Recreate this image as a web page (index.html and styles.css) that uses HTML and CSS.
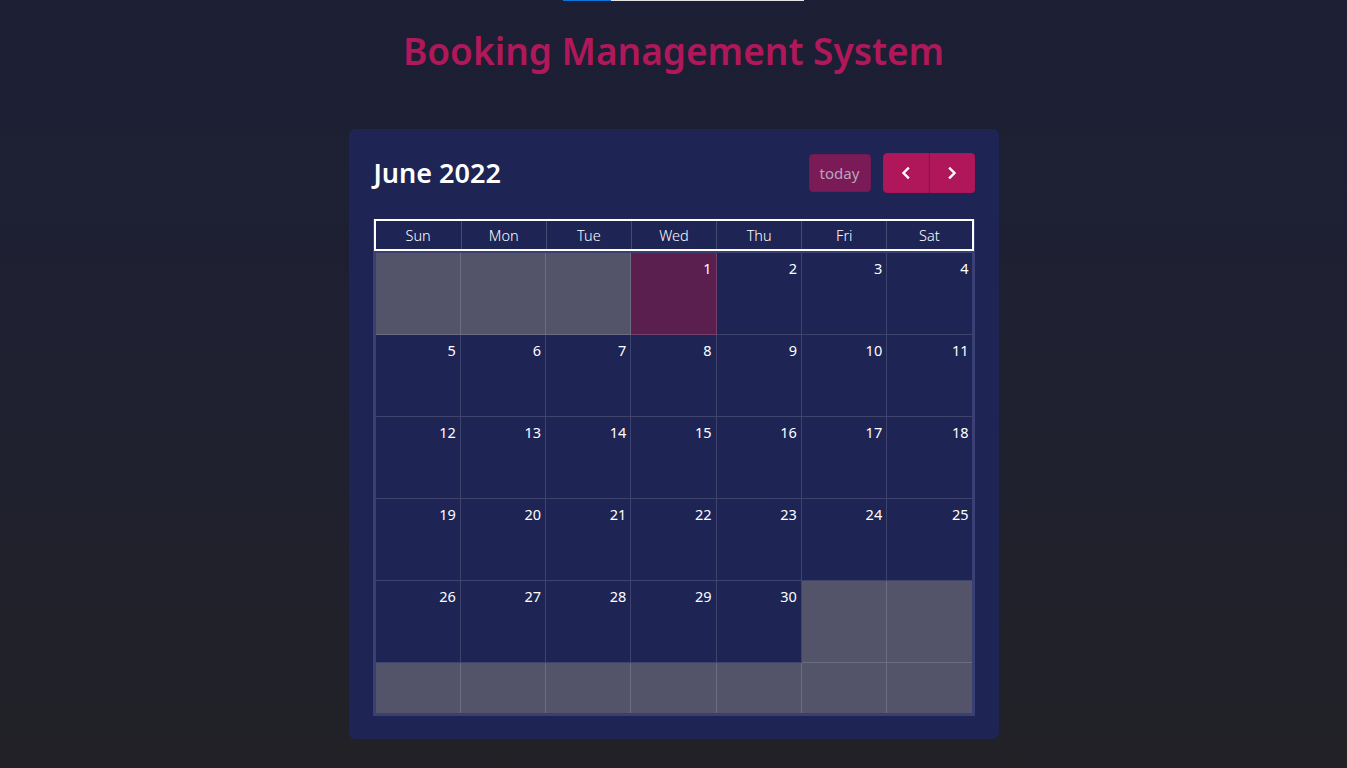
FILE: index.html
```html
<!DOCTYPE html>
<html lang="en">
<head>
<meta charset="utf-8">
<title>Booking Management System</title>
<link rel="stylesheet" href="styles.css">
</head>
<body>
<div class="topbar"><div class="topbar-fill"></div></div>
<h1 class="page-title">Booking Management System</h1>
<div class="card">
  <div class="toolbar">
    <h2 class="month-title">June 2022</h2>
    <div class="toolbar-actions">
      <button class="btn btn-today" disabled>today</button>
      <div class="btn-group">
        <button class="btn btn-nav" aria-label="prev">
          <svg width="14" height="14" viewBox="0 0 14 14"><polyline points="9,2.5 4.5,7 9,11.5" fill="none" stroke="#fff" stroke-width="2.4" stroke-linecap="square"/></svg>
        </button>
        <button class="btn btn-nav btn-nav-right" aria-label="next">
          <svg width="14" height="14" viewBox="0 0 14 14"><polyline points="5,2.5 9.5,7 5,11.5" fill="none" stroke="#fff" stroke-width="2.4" stroke-linecap="square"/></svg>
        </button>
      </div>
    </div>
  </div>
  <div class="calendar">
    <div class="cal-head">
      <div class="head-cell">Sun</div>
      <div class="head-cell">Mon</div>
      <div class="head-cell">Tue</div>
      <div class="head-cell">Wed</div>
      <div class="head-cell">Thu</div>
      <div class="head-cell">Fri</div>
      <div class="head-cell">Sat</div>
    </div>
    <div class="cal-body">
      <div class="day other"></div>
      <div class="day other"></div>
      <div class="day other"></div>
      <div class="day today">1</div>
      <div class="day">2</div>
      <div class="day">3</div>
      <div class="day">4</div>
      <div class="day">5</div>
      <div class="day">6</div>
      <div class="day">7</div>
      <div class="day">8</div>
      <div class="day">9</div>
      <div class="day">10</div>
      <div class="day">11</div>
      <div class="day">12</div>
      <div class="day">13</div>
      <div class="day">14</div>
      <div class="day">15</div>
      <div class="day">16</div>
      <div class="day">17</div>
      <div class="day">18</div>
      <div class="day">19</div>
      <div class="day">20</div>
      <div class="day">21</div>
      <div class="day">22</div>
      <div class="day">23</div>
      <div class="day">24</div>
      <div class="day">25</div>
      <div class="day">26</div>
      <div class="day">27</div>
      <div class="day">28</div>
      <div class="day">29</div>
      <div class="day">30</div>
      <div class="day other"></div>
      <div class="day other"></div>
      <div class="day other short"></div>
      <div class="day other short"></div>
      <div class="day other short"></div>
      <div class="day other short"></div>
      <div class="day other short"></div>
      <div class="day other short"></div>
      <div class="day other short"></div>
    </div>
  </div>
</div>
</body>
</html>
```

FILE: styles.css
```css
* { box-sizing: border-box; }

html, body {
  margin: 0;
  padding: 0;
}

body {
  min-height: 768px;
  background: linear-gradient(180deg, #1c1f35 0%, #1f2030 50%, #212126 100%);
  font-family: "Noto Sans", "Open Sans", sans-serif;
  color: #fff;
  overflow: hidden;
}

.topbar {
  width: 241px;
  height: 1px;
  margin-left: 563px;
  background: #e4e4e4;
}

.topbar-fill {
  width: 48px;
  height: 1px;
  background: #0a74da;
}

.page-title {
  margin: 26px 0 0;
  text-align: center;
  font-size: 37px;
  line-height: 48px;
  font-weight: 600;
  color: #b0185a;
}

.card {
  width: 650px;
  margin: 54px auto 0;
  padding: 24px 24px 23px;
  background: #1e2454;
  border-radius: 6px;
}

.toolbar {
  display: flex;
  align-items: center;
  justify-content: space-between;
  height: 40px;
  margin-bottom: 26px;
}

.month-title {
  margin: 0 0 0 1px;
  font-size: 27px;
  font-weight: 600;
  line-height: 34px;
  color: #fff;
}

.toolbar-actions {
  display: flex;
  align-items: center;
  gap: 12px;
}

.btn {
  font-family: inherit;
  border: 1px solid transparent;
  border-radius: 4px;
  cursor: pointer;
}

.btn-today {
  width: 62px;
  height: 38px;
  background: #7a1a56;
  border-color: #6e1b55;
  color: #b9a5be;
  font-size: 15px;
  padding: 0;
}

.btn-group {
  display: flex;
}

.btn-nav {
  width: 46px;
  height: 40px;
  background: #b0165a;
  border-color: #a8175a;
  display: flex;
  align-items: center;
  justify-content: center;
  padding: 0;
  border-radius: 4px 0 0 4px;
}

.btn-nav-right {
  border-radius: 0 4px 4px 0;
  border-left: 1px solid #7a1a50;
}

.calendar {
  border: 1px solid #3a4074;
  border-top: none;
  background: #3a4074;
}

.cal-head {
  display: grid;
  grid-template-columns: repeat(7, 1fr);
  border: 2px solid #ffffff;
  background: #1e2454;
  height: 32px;
}

.head-cell {
  font-size: 14.5px;
  font-weight: 300;
  line-height: 29px;
  text-align: center;
  color: #fff;
  border-left: 1px solid rgba(255, 255, 255, 0.18);
}

.head-cell:first-child { border-left: none; }

.cal-body {
  display: grid;
  grid-template-columns: repeat(7, 1fr);
  grid-template-rows: repeat(5, 82px) 50px;
  margin: 2px 1px 0 2px;
  padding-bottom: 2px;
  background: #3a4074;
}

.day {
  background: #1e2454;
  border-right: 1px solid rgba(255, 255, 255, 0.15);
  border-bottom: 1px solid rgba(255, 255, 255, 0.15);
  text-align: right;
  padding: 5px 4px 0 0;
  font-size: 14.5px;
  line-height: 20px;
  color: #fff;
}

.day:nth-child(7n) { border-right: none; }

.day.other { background: #535469; }
.day.today { background: #5a1f4e; }
.day.short { border-bottom: none; }
```
